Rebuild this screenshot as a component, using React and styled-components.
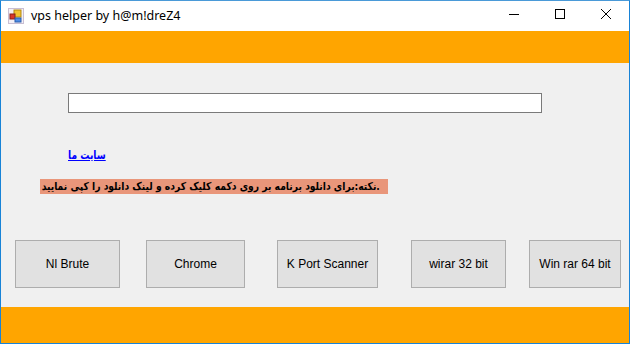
import React from "react";
import styled, { createGlobalStyle } from "styled-components";

const GlobalStyle = createGlobalStyle`
  html, body {
    margin: 0;
    padding: 0;
    background: #ffffff;
  }
`;

const buttons = [
	{ label: "Nl Brute", w: 105, ml: 14 },
	{ label: "Chrome", w: 99, ml: 26 },
	{ label: "K Port Scanner", w: 101, ml: 32 },
	{ label: "wirar 32 bit", w: 95, ml: 33 },
	{ label: "Win rar 64 bit", w: 92, ml: 23 },
];

const AppIcon = () => (
	<svg width="16" height="16" viewBox="0 0 16 16">
		<rect x="0.5" y="0.5" width="15" height="15" fill="#f4f0f6" stroke="#c9bfd3" />
		<rect x="6" y="2" width="7" height="7" fill="#f2c230" stroke="#b38a10" />
		<rect x="2" y="6" width="5" height="5" fill="#d8362a" stroke="#8a1f18" />
		<rect x="7" y="10" width="6" height="4" fill="#4f8ee6" stroke="#2a5cab" />
	</svg>
);

const App = () => {
	return (
		<>
			<GlobalStyle />
			<Window>
				<TitleBar>
					<TitleLeft>
						<AppIcon />
						<Title>vps helper by h@m!dreZ4</Title>
					</TitleLeft>
					<Controls>
						<CtrlButton>
							<svg width="10" height="10" viewBox="0 0 10 10">
								<line x1="0" y1="5.5" x2="10" y2="5.5" stroke="#000" strokeWidth="1" />
							</svg>
						</CtrlButton>
						<CtrlButton>
							<svg width="10" height="10" viewBox="0 0 10 10">
								<rect x="0.5" y="0.5" width="9" height="9" fill="none" stroke="#000" strokeWidth="1" />
							</svg>
						</CtrlButton>
						<CtrlButton>
							<svg width="10" height="10" viewBox="0 0 10 10">
								<path d="M0 0 L10 10 M10 0 L0 10" stroke="#000" strokeWidth="1" />
							</svg>
						</CtrlButton>
					</Controls>
				</TitleBar>
				<OrangeBand $h={32} />
				<Body>
					<TextBox type="text" />
					<LinkWrap>
						<SiteLink href="#">سایت ما</SiteLink>
					</LinkWrap>
					<Note>
						<NoteText>نکته:برای دانلود برنامه بر روی دکمه کلیک کرده و لینک دانلود را کپی نمایید.</NoteText>
					</Note>
					<ButtonRow>
						{buttons.map((b) => (
							<ActionButton key={b.label} $w={b.w} $ml={b.ml}>
								{b.label}
							</ActionButton>
						))}
					</ButtonRow>
				</Body>
				<OrangeBand $h={36} />
			</Window>
		</>
	);
};

export default App;

const Window = styled.div`
	width: 630px;
	height: 344px;
	box-sizing: border-box;
	border: 1px solid #1883d7;
	border-top-color: #4a9ad8;
	display: flex;
	flex-direction: column;
	background: #f0f0f0;
	overflow: hidden;
`;

const TitleBar = styled.div`
	height: 30px;
	background: #ffffff;
	display: flex;
	align-items: center;
	justify-content: space-between;
`;

const TitleLeft = styled.div`
	display: flex;
	align-items: center;
	padding-left: 7px;
	gap: 7px;
`;

const Title = styled.span`
	font-family: "Noto Sans", "Open Sans", sans-serif;
	font-size: 12.5px;
	color: #000;
	margin-top: -1px;
`;

const Controls = styled.div`
	display: flex;
	height: 100%;
`;

const CtrlButton = styled.div`
	width: 46px;
	height: 100%;
	display: flex;
	align-items: center;
	justify-content: center;
	margin-top: -2px;
`;

const OrangeBand = styled.div`
	height: ${(p) => p.$h}px;
	background: #ffa500;
	flex-shrink: 0;
`;

const Body = styled.div`
	flex: 1;
	display: flex;
	flex-direction: column;
	align-items: flex-start;
	background: #f0f0f0;
`;

const TextBox = styled.input`
	box-sizing: border-box;
	width: 474px;
	height: 20px;
	margin: 30px 0 0 67px;
	border: 1px solid #7a7a7a;
	background: #fff;
	outline: none;
	padding: 0 3px;
`;

const LinkWrap = styled.div`
	margin: 35px 0 0 67px;
	width: 38px;
	height: 15px;
	display: flex;
	align-items: center;
	white-space: nowrap;
`;

const SiteLink = styled.a`
	display: inline-block;
	font-family: "DejaVu Sans", sans-serif;
	font-weight: bold;
	font-size: 12px;
	line-height: 15px;
	color: #0000ff;
	text-decoration: underline;
	transform: scaleX(0.76);
	transform-origin: left center;
`;

const Note = styled.div`
	margin: 16px 0 0 39px;
	width: 348px;
	height: 15px;
	background: #e9967a;
	display: flex;
	align-items: center;
	white-space: nowrap;
`;

const NoteText = styled.span`
	display: block;
	font-family: "DejaVu Sans", sans-serif;
	font-weight: bold;
	font-size: 11px;
	line-height: 15px;
	color: #000;
	padding-left: 2px;
	transform: scaleX(0.835);
	transform-origin: left center;
`;

const ButtonRow = styled.div`
	display: flex;
	margin-top: 46px;
`;

const ActionButton = styled.button`
	box-sizing: border-box;
	width: ${(p) => p.$w}px;
	margin-left: ${(p) => p.$ml}px;
	height: 48px;
	background: #e1e1e1;
	border: 1px solid #adadad;
	font-family: "Liberation Sans", Arial, sans-serif;
	font-size: 12px;
	color: #000;
	padding: 0;
	white-space: nowrap;
`;
